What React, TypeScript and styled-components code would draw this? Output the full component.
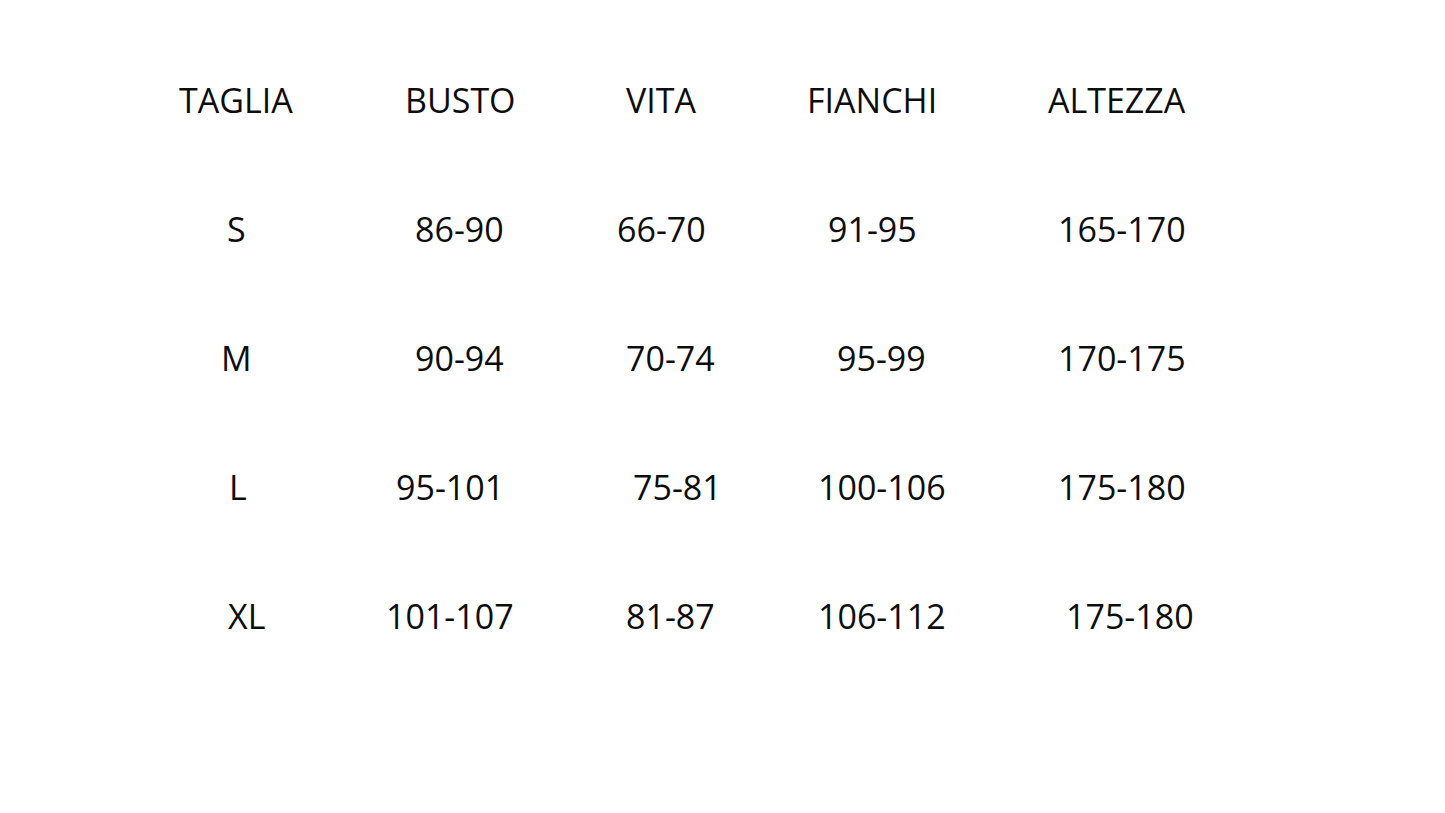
import React from "react";
import styled, { createGlobalStyle } from "styled-components";

const Global = createGlobalStyle`
  html, body { margin: 0; padding: 0; background: #ffffff; }
  body { font-family: "Open Sans", "Liberation Sans", sans-serif; color: #111111; }
`;

const Page = styled.div`
  width: 1445px;
  height: 813px;
  box-sizing: border-box;
  padding: 78px 0 0 179px;
  background: #ffffff;
`;

const Table = styled.div`
  display: flex;
  flex-direction: column;
`;

const Row = styled.div`
  display: grid;
  grid-template-columns: 207px 231px 190px 241px 200px;
  height: 129px;
  align-items: start;
`;

const Cell = styled.div<{ $shift: number }>`
  padding-left: ${(p) => p.$shift}px;
  font-size: 34px;
  line-height: 45px;
  font-weight: 400;
  white-space: nowrap;
  color: #0d0d0d;
`;

const bases = [179, 386, 617, 807, 1048];

const rows: [string, number][][] = [
  [["TAGLIA", 179], ["BUSTO", 405], ["VITA", 626], ["FIANCHI", 807], ["ALTEZZA", 1048]],
  [["S", 227], ["86-90", 415], ["66-70", 617], ["91-95", 828], ["165-170", 1058]],
  [["M", 221], ["90-94", 415], ["70-74", 626], ["95-99", 837], ["170-175", 1058]],
  [["L", 229], ["95-101", 396], ["75-81", 633], ["100-106", 818], ["175-180", 1058]],
  [["XL", 228], ["101-107", 386], ["81-87", 626], ["106-112", 818], ["175-180", 1066]],
];

export default function App() {
  return (
    <>
      <Global />
      <Page>
        <Table>
          {rows.map((r, i) => (
            <Row key={i}>
              {r.map(([text, x], j) => (
                <Cell key={j} $shift={x - bases[j]}>
                  {text}
                </Cell>
              ))}
            </Row>
          ))}
        </Table>
      </Page>
    </>
  );
}
